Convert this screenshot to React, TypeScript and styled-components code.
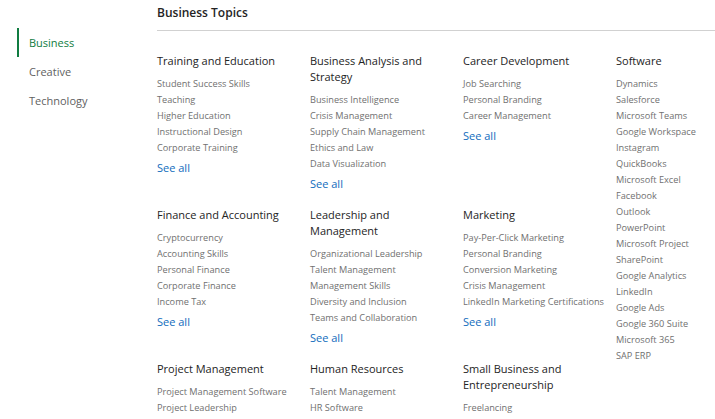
import React from "react";
import styled, { createGlobalStyle } from "styled-components";

const Global = createGlobalStyle`
  html, body { margin: 0; padding: 0; background: #ffffff; }
  body { font-family: "Open Sans", "Noto Sans", sans-serif; overflow: hidden; }
  * { box-sizing: border-box; }
`;

const Page = styled.div`
  display: flex;
  width: 715px;
  height: 419px;
  overflow: hidden;
`;

const Sidebar = styled.nav`
  width: 157px;
  flex: none;
  padding: 28px 0 0 17px;
  display: flex;
  flex-direction: column;
`;

const NavItem = styled.a<{ $active?: boolean }>`
  display: flex;
  align-items: center;
  height: 29px;
  padding-left: 10px;
  padding-bottom: 1px;
  border-left: 2px solid ${(p) => (p.$active ? "#107c41" : "transparent")};
  color: ${(p) => (p.$active ? "#107c41" : "#616161")};
  font-size: 11px;
  cursor: pointer;
`;

const Main = styled.main`
  flex: 1;
  min-width: 0;
  padding-top: 3px;
`;

const Title = styled.h2`
  margin: 0;
  font-size: 12px;
  line-height: 20px;
  font-weight: 600;
  color: #242424;
  padding-bottom: 7px;
  border-bottom: 1px solid #d1d1d1;
`;

const Grid = styled.div`
  display: grid;
  grid-template-columns: repeat(4, 153px);
  row-gap: 15px;
  align-items: start;
  padding-top: 22px;
`;

const Group = styled.section<{ $tall?: boolean }>`
  display: flex;
  flex-direction: column;
  padding-right: 10px;
  ${(p) => (p.$tall ? "grid-column: 4; grid-row: 1 / span 3;" : "")}
`;

const GroupTitle = styled.h3`
  margin: 0 0 7px;
  font-size: 11px;
  line-height: 16px;
  font-weight: 400;
  color: #242424;
`;

const TopicList = styled.ul`
  list-style: none;
  margin: 0;
  padding: 0;
`;

const Topic = styled.li`
  font-size: 9.2px;
  line-height: 16px;
  color: #707070;
  white-space: nowrap;
`;

const SeeAll = styled.a`
  margin-top: 4px;
  font-size: 11px;
  line-height: 16px;
  color: #0f6cbd;
  cursor: pointer;
`;

type G = { title: string; items: string[]; seeAll?: boolean; tall?: boolean };

const groups: G[] = [
  { title: "Training and Education", items: ["Student Success Skills", "Teaching", "Higher Education", "Instructional Design", "Corporate Training"], seeAll: true },
  { title: "Business Analysis and Strategy", items: ["Business Intelligence", "Crisis Management", "Supply Chain Management", "Ethics and Law", "Data Visualization"], seeAll: true },
  { title: "Career Development", items: ["Job Searching", "Personal Branding", "Career Management"], seeAll: true },
  {
    title: "Software",
    tall: true,
    items: ["Dynamics", "Salesforce", "Microsoft Teams", "Google Workspace", "Instagram", "QuickBooks", "Microsoft Excel", "Facebook", "Outlook", "PowerPoint", "Microsoft Project", "SharePoint", "Google Analytics", "LinkedIn", "Google Ads", "Google 360 Suite", "Microsoft 365", "SAP ERP"],
  },
  { title: "Finance and Accounting", items: ["Cryptocurrency", "Accounting Skills", "Personal Finance", "Corporate Finance", "Income Tax"], seeAll: true },
  { title: "Leadership and Management", items: ["Organizational Leadership", "Talent Management", "Management Skills", "Diversity and Inclusion", "Teams and Collaboration"], seeAll: true },
  { title: "Marketing", items: ["Pay-Per-Click Marketing", "Personal Branding", "Conversion Marketing", "Crisis Management", "LinkedIn Marketing Certifications"], seeAll: true },
  { title: "Project Management", items: ["Project Management Software", "Project Leadership", "Agile"], seeAll: true },
  { title: "Human Resources", items: ["Talent Management", "HR Software", "Recruiting"], seeAll: true },
  { title: "Small Business and Entrepreneurship", items: ["Freelancing", "Small Business"], seeAll: true },
];

export default function App() {
  return (
    <>
      <Global />
      <Page>
        <Sidebar>
          <NavItem $active>Business</NavItem>
          <NavItem>Creative</NavItem>
          <NavItem>Technology</NavItem>
        </Sidebar>
        <Main>
          <Title>Business Topics</Title>
          <Grid>
            {groups.map((g) => (
              <Group key={g.title} $tall={g.tall}>
                <GroupTitle>{g.title}</GroupTitle>
                <TopicList>
                  {g.items.map((i) => (
                    <Topic key={i}>{i}</Topic>
                  ))}
                </TopicList>
                {g.seeAll && <SeeAll>See all</SeeAll>}
              </Group>
            ))}
          </Grid>
        </Main>
      </Page>
    </>
  );
}
